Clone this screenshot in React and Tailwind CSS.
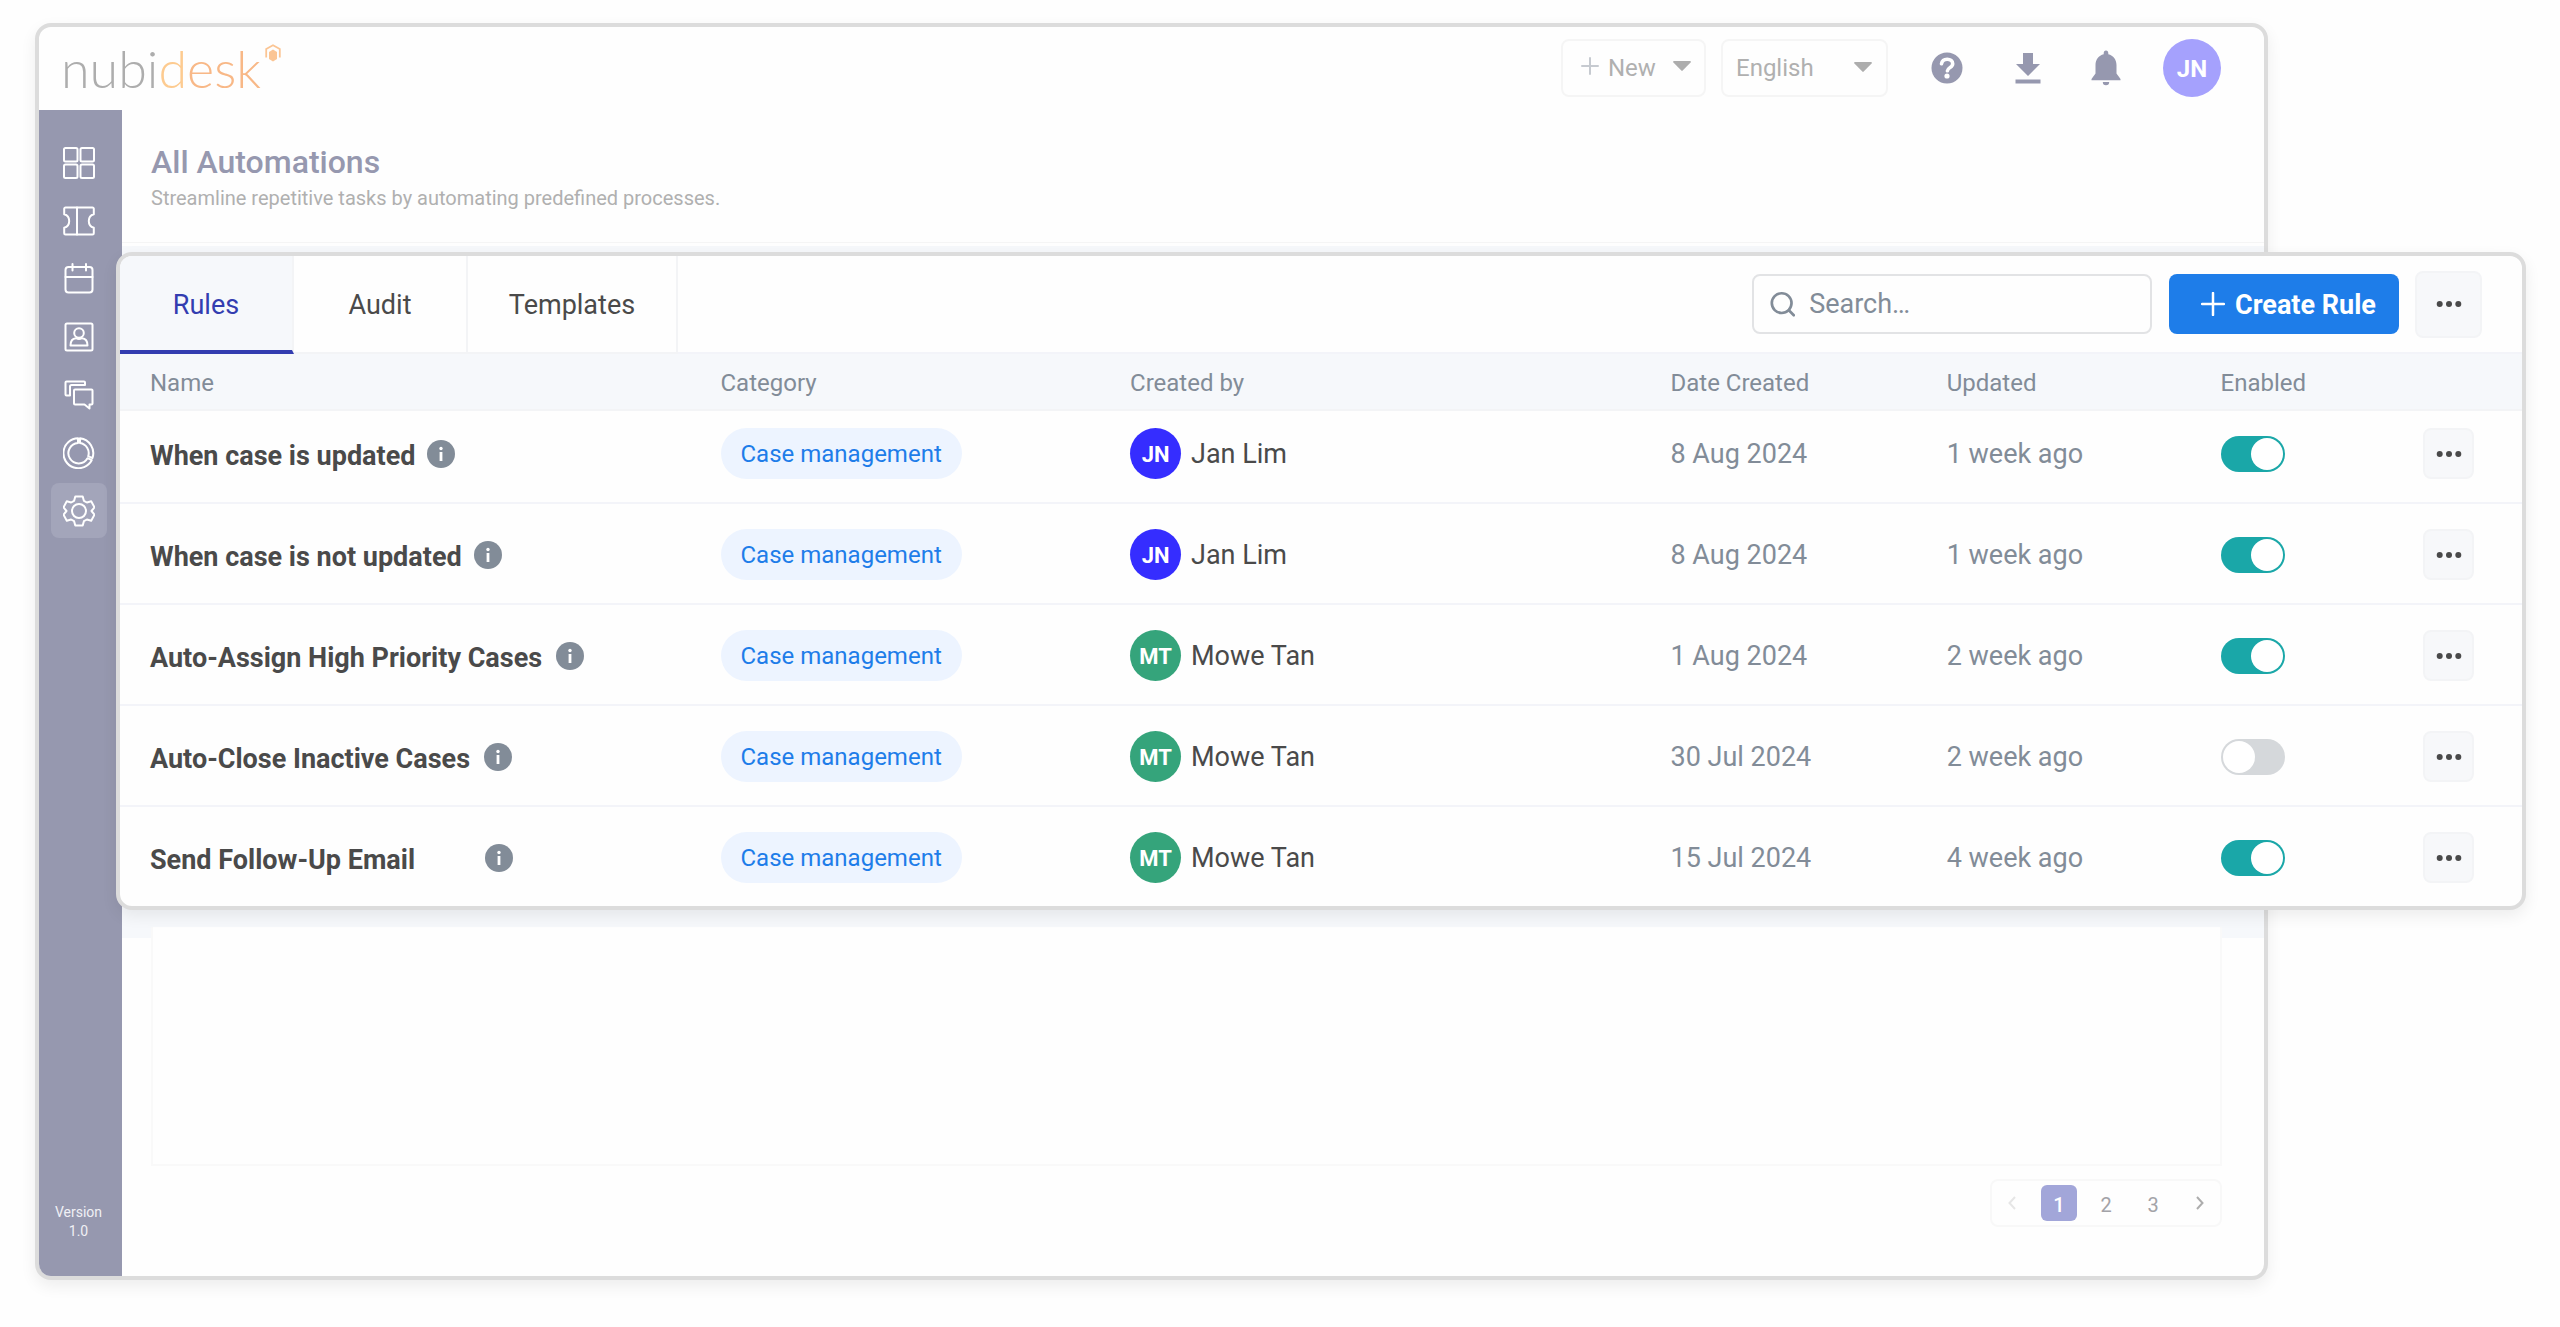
import { useState } from 'react';

const initialRules = [
  { id: 1, name: 'When case is updated', infoGap: 'ml-3', category: 'Case management', initials: 'JN', avatar: 'bg-[#352dff]', owner: 'Jan Lim', created: '8 Aug 2024', updated: '1 week ago', enabled: true },
  { id: 2, name: 'When case is not updated', infoGap: 'ml-3', category: 'Case management', initials: 'JN', avatar: 'bg-[#352dff]', owner: 'Jan Lim', created: '8 Aug 2024', updated: '1 week ago', enabled: true },
  { id: 3, name: 'Auto-Assign High Priority Cases', infoGap: 'ml-[14px]', category: 'Case management', initials: 'MT', avatar: 'bg-[#35a47b]', owner: 'Mowe Tan', created: '1 Aug 2024', updated: '2 week ago', enabled: true },
  { id: 4, name: 'Auto-Close Inactive Cases', infoGap: 'ml-[14px]', category: 'Case management', initials: 'MT', avatar: 'bg-[#35a47b]', owner: 'Mowe Tan', created: '30 Jul 2024', updated: '2 week ago', enabled: false },
  { id: 5, name: 'Send Follow-Up Email', infoGap: 'ml-[70px]', category: 'Case management', initials: 'MT', avatar: 'bg-[#35a47b]', owner: 'Mowe Tan', created: '15 Jul 2024', updated: '4 week ago', enabled: true },
];

const tabs = [
  { name: 'Rules', width: 'w-[174px]' },
  { name: 'Audit', width: 'w-[174px]' },
  { name: 'Templates', width: 'w-[210px]' },
];

function LineIcon({ children }) {
  return (
    <svg viewBox="0 0 32 32" className="size-8" fill="none" stroke="currentColor" strokeWidth="2" strokeLinejoin="round" strokeLinecap="round" aria-hidden="true">
      {children}
    </svg>
  );
}

const navItems = [
  {
    label: 'Dashboard',
    icon: (
      <LineIcon>
        <rect x="1" y="1" width="13.500" height="13.500" rx="1.500" />
        <rect x="17.500" y="1" width="13.500" height="13.500" rx="1.500" />
        <rect x="1" y="17.500" width="13.500" height="13.500" rx="1.500" />
        <rect x="17.500" y="17.500" width="13.500" height="13.500" rx="1.500" />
      </LineIcon>
    ),
  },
  {
    label: 'Cases',
    icon: (
      <LineIcon>
        <path d="M2.500 2.500h27a1.300 1.300 0 0 1 1.300 1.300v5.400c-3.400.9-5 3.500-5 6.800s1.600 5.900 5 6.800v5.400a1.300 1.300 0 0 1-1.300 1.300h-27a1.300 1.300 0 0 1-1.300-1.300v-5.400c3.400-.9 5-3.500 5-6.800s-1.600-5.900-5-6.800V3.800a1.300 1.300 0 0 1 1.300-1.300z" />
        <path d="M14 2.500v27" />
      </LineIcon>
    ),
  },
  {
    label: 'Calendar',
    icon: (
      <LineIcon>
        <rect x="2.500" y="4" width="27" height="25.500" rx="3" />
        <path d="M2.500 14h27M9.500 1v6.500M23 1v6.500" />
      </LineIcon>
    ),
  },
  {
    label: 'Contacts',
    icon: (
      <LineIcon>
        <rect x="2.500" y="2.500" width="27" height="27" rx="1.500" />
        <circle cx="16" cy="12" r="4.800" />
        <path d="M7.500 24.500c0-4.500 2-7 5.500-7.300 1.800 1 4.200 1 6 0 3.500.3 5.500 2.800 5.500 7.300z" />
      </LineIcon>
    ),
  },
  {
    label: 'Conversations',
    icon: (
      <LineIcon>
        <path d="M7 16.500H3.500a1 1 0 0 1-1-1V3.500a1 1 0 0 1 1-1H21a1 1 0 0 1 1 1v2.500H8.500A1.500 1.500 0 0 0 7 7.500z" />
        <path d="M12 10.500h16.500a1 1 0 0 1 1 1v13a1 1 0 0 1-1 1h-2v4l-5-4H12a1 1 0 0 1-1-1v-13a1 1 0 0 1 1-1z" />
      </LineIcon>
    ),
  },
  {
    label: 'Reports',
    icon: (
      <LineIcon>
        <path d="M15 1.200a15 15 0 1 0 13.700 22l-4.200-2A10.200 10.200 0 1 1 15 6z" />
        <path d="M17 1.200V6a10.200 10.200 0 0 1 8.200 13.200l4.200 1.900A15 15 0 0 0 17 1.200z" />
      </LineIcon>
    ),
  },
  {
    label: 'Settings',
    active: true,
    icon: (
      <LineIcon>
        <circle cx="16" cy="16" r="7" />
        <path d="M12.300 1.500h7.400l1.200 4.300 3 1.700 4.300-1.200 3.300 6-3 3.700 3 3.700-3.300 6-4.300-1.200-3 1.700-1.200 4.300h-7.400l-1.200-4.300-3-1.700-4.300 1.200-3.300-6 3-3.700-3-3.700 3.300-6 4.300 1.200 3-1.700z" />
      </LineIcon>
    ),
  },
];

function Caret({ className }) {
  return (
    <svg viewBox="0 0 18 10" className={`h-[10px] w-[18px] ${className}`} fill="#adadad" aria-hidden="true">
      <path d="M1 0h16q1.400.2.6 1.400L9.700 9.600q-.7.700-1.400 0L.4 1.400Q-.4.200 1 0z" />
    </svg>
  );
}

function Dots() {
  return (
    <svg viewBox="0 0 26 8" className="h-2 w-[26px]" fill="#4a4a4a" aria-hidden="true">
      <circle cx="3.700" cy="4" r="3" />
      <circle cx="13" cy="4" r="3" />
      <circle cx="22.300" cy="4" r="3" />
    </svg>
  );
}

function InfoIcon() {
  return (
    <svg viewBox="0 0 28 28" className="size-7" aria-hidden="true">
      <circle cx="14" cy="14" r="14" fill="#828c98" />
      <circle cx="14" cy="8.500" r="1.700" fill="#fff" />
      <path d="M14 12v9" stroke="#fff" strokeWidth="2.800" />
    </svg>
  );
}

function Logo() {
  return (
    <a href="#home" className="flex items-start font-['Lato',sans-serif] text-[52px] leading-[60px] font-light" aria-label="nubidesk">
      <span className="text-[#adadad]">nubi</span>
      <span className="text-[#fdcb90]">d</span>
      <span className="text-[#f8b887]">esk</span>
      <svg viewBox="0 0 16 18" className="mt-[6px] ml-1 h-[18px] w-4" aria-hidden="true">
        <path d="M1.200 13.500V5L8 1.200 14.800 5v8.500" fill="none" stroke="#fbc594" strokeWidth="1.800" />
        <path d="M8 5.500l4 2.500v7L8 17.500 4 15V8z" fill="#fbc594" />
      </svg>
    </a>
  );
}

function TopBar() {
  return (
    <header className="flex h-[83px] items-center pr-[43px] pb-[2px] pl-[22px]">
      <Logo />
      <div className="ml-auto flex items-center text-2xl text-[#b0b0b0]">
        <button className="flex h-[58px] w-[145px] items-center rounded-lg border-2 border-[#f5f5f5] pl-[18px]">
          <svg viewBox="0 0 18 18" className="mb-1 size-[18px]" stroke="#c6cad0" strokeWidth="2" strokeLinecap="round" aria-hidden="true">
            <path d="M9 1v16M1 9h16" />
          </svg>
          <span className="ml-[9px]">New</span>
          <Caret className="mr-[13px] mb-1 ml-auto" />
        </button>
        <div className="relative ml-[15px]">
          <select aria-label="Language" className="h-[58px] w-[167px] appearance-none rounded-lg border-2 border-[#f5f5f5] pl-[13px]">
            <option>English</option>
          </select>
          <Caret className="pointer-events-none absolute top-[23px] right-4" />
        </div>
        <button aria-label="Help" className="ml-[43px]">
          <svg viewBox="0 0 32 32" className="size-8">
            <circle cx="16" cy="16" r="15.500" fill="#9698af" />
            <path d="M10.500 11.800c.5-3 2.600-4.600 5.700-4.600 3.200 0 5.500 1.800 5.500 4.500 0 3.800-5 3.900-5.300 7.100" fill="none" stroke="#fff" strokeWidth="3.600" strokeLinecap="round" strokeLinejoin="round" />
            <circle cx="16" cy="24" r="2.600" fill="#fff" />
          </svg>
        </button>
        <button aria-label="Download" className="ml-[52px]">
          <svg viewBox="0 0 26 32" className="h-8 w-[26px]" fill="#9698af">
            <path d="M8 1h10v11h7L13 24 1 12h7zM.500 27.500h25v4H.500z" />
          </svg>
        </button>
        <button aria-label="Notifications" className="ml-[50px]">
          <svg viewBox="0 0 30 36" className="h-9 w-[30px]" fill="#9698af">
            <path d="M15 .500c1.500 0 2.300 1.200 2.300 2.700v1c5 1.200 8.200 5.300 8.200 10.800v8.500L29.500 29v1.300H.500V29l4-5.500V15c0-5.500 3.200-9.600 8.200-10.800v-1C12.700 1.700 13.500.500 15 .500zM11.800 32h6.400a3.200 3.200 0 0 1-6.400 0z" />
          </svg>
        </button>
        <button aria-label="Account" className="ml-[42px] size-[58px] rounded-full bg-[#a5a1fd] pt-[2px] text-2xl font-bold text-white">
          JN
        </button>
      </div>
    </header>
  );
}

function Sidebar() {
  return (
    <nav className="flex w-[83px] flex-col items-center bg-[#9698af] pt-[25px] pr-1 pb-[35px] text-white">
      <ul className="flex flex-col gap-[3px]">
        {navItems.map((item) => (
          <li key={item.label}>
            <a
              href={`#${item.label.toLowerCase()}`}
              aria-label={item.label}
              className={`flex h-[55px] w-14 items-center justify-center rounded-lg ${item.active ? 'bg-[#a3a5ba]' : ''}`}
            >
              {item.icon}
            </a>
          </li>
        ))}
      </ul>
      <p className="mt-auto text-center text-sm leading-[19px] text-[#f0f0f5]">
        Version
        <br />
        1.0
      </p>
    </nav>
  );
}

function Pagination() {
  return (
    <div className="flex h-12 items-center gap-[11px] rounded-lg border-2 border-[#f8f8f8] px-[2px] text-xl text-[#a3a3a8]">
      <button aria-label="Previous page" className="flex size-9 items-center justify-center">
        <svg viewBox="0 0 8 14" className="h-[14px] w-2" fill="none" stroke="#e6e6e6" strokeWidth="2">
          <path d="M7 1L1.500 7 7 13" />
        </svg>
      </button>
      <button className="size-9 rounded-md bg-[#a2a6d9] pt-1 font-medium text-white">1</button>
      <button className="size-9 pt-1">2</button>
      <button className="size-9 pt-1">3</button>
      <button aria-label="Next page" className="flex size-9 items-center justify-center">
        <svg viewBox="0 0 8 14" className="h-[14px] w-2" fill="none" stroke="#adadad" strokeWidth="2">
          <path d="M1 1l5.500 6L1 13" />
        </svg>
      </button>
    </div>
  );
}

function RulesPanel() {
  const [activeTab, setActiveTab] = useState('Rules');
  const [rules, setRules] = useState(initialRules);

  const toggleRule = (id) => {
    setRules(rules.map((rule) => (rule.id === id ? { ...rule, enabled: !rule.enabled } : rule)));
  };

  return (
    <section className="absolute top-[252px] right-[34px] left-[116px] overflow-hidden rounded-2xl border-4 border-[#dcdcdc] bg-[#fefefe] shadow-[0_6px_16px_rgba(0,0,0,0.07)]">
      {/* Tabs and actions */}
      <div className="flex h-[98px]">
        <div role="tablist" className="flex text-[27px] text-[#4a4a4a]">
          {tabs.map((tab) => (
            <button
              key={tab.name}
              role="tab"
              aria-selected={activeTab === tab.name}
              onClick={() => setActiveTab(tab.name)}
              className={`${tab.width} border-r-2 border-r-[#f3f4f6] ${
                activeTab === tab.name ? 'border-b-4 border-b-[#333db0] bg-[#f6f8fb] pt-1 text-[#333db0]' : 'border-b-2 border-b-[#f3f4f6] pt-[2px]'
              }`}
            >
              {tab.name}
            </button>
          ))}
        </div>
        <div className="flex flex-1 items-center justify-end border-b-2 border-[#f3f4f9] pr-10">
          <label className="flex h-[60px] w-[400px] items-center rounded-lg border-2 border-[#e2e3e5] pl-4">
            <svg viewBox="0 0 28 28" className="size-7" fill="none" stroke="#828c98" strokeWidth="3" strokeLinecap="round" aria-hidden="true">
              <circle cx="13" cy="13" r="11" />
              <path d="M21 21l5.500 5.500" />
            </svg>
            <input type="text" aria-label="Search" placeholder="Search…" className="ml-[14px] w-full min-w-0 text-[27px] outline-none placeholder:text-[#828c98]" />
          </label>
          <button className="ml-[17px] flex h-[60px] w-[230px] items-center rounded-lg bg-[#1e7de9] pl-8 text-[27px] font-bold text-white">
            <svg viewBox="0 0 24 24" className="size-6" stroke="currentColor" strokeWidth="2.500" strokeLinecap="round" aria-hidden="true">
              <path d="M12 1v22M1 12h22" />
            </svg>
            <span className="ml-[10px] pt-[2px] whitespace-nowrap">Create Rule</span>
          </button>
          <button aria-label="More actions" className="ml-4 flex size-[67px] items-center justify-center rounded-lg border-2 border-[#f3f4f6] bg-[#f7f8fa]">
            <Dots />
          </button>
        </div>
      </div>

      {/* Rules table */}
      <table className="w-full table-fixed border-separate border-spacing-0 text-[27px] leading-8 text-[#828c98]">
        <colgroup>
          <col className="w-[25%]" />
          <col className="w-[17.05%]" />
          <col className="w-[22.5%]" />
          <col className="w-[11.5%]" />
          <col className="w-[11.4%]" />
          <col className="w-[8.45%]" />
          <col />
        </colgroup>
        <thead className="bg-[#f6f8fb] text-2xl">
          <tr className="h-[57px] text-left *:border-b-2 *:border-[#f3f4f6] *:pt-[2px] *:font-normal">
            <th className="pl-[30px]">Name</th>
            <th>Category</th>
            <th>Created by</th>
            <th>Date Created</th>
            <th>Updated</th>
            <th>Enabled</th>
            <th aria-label="Actions" />
          </tr>
        </thead>
        <tbody>
          {rules.map((rule) => (
            <tr
              key={rule.id}
              className="*:border-b-2 *:border-[#f3f4f9] *:pt-[25px] *:pb-[23px] first:*:pt-[17px] last:*:border-b-0"
            >
              <td className="pl-[30px]">
                <div className="flex items-center">
                  <span className="pt-1 font-bold whitespace-nowrap text-[#4a4a4a]">{rule.name}</span>
                  <button aria-label={`About ${rule.name}`} className={rule.infoGap}>
                    <InfoIcon />
                  </button>
                </div>
              </td>
              <td>
                <span className="inline-flex h-[51px] items-center rounded-full bg-[#edf4ff] px-5 align-top text-2xl text-[#1e7de9]">
                  {rule.category}
                </span>
              </td>
              <td>
                <div className="flex items-center gap-[10px] text-[#4a4a4a]">
                  <span className={`flex size-[51px] items-center justify-center rounded-full pt-[2px] text-[22px] font-bold text-white ${rule.avatar}`}>
                    {rule.initials}
                  </span>
                  {rule.owner}
                </div>
              </td>
              <td>{rule.created}</td>
              <td>{rule.updated}</td>
              <td>
                <input
                  type="checkbox"
                  role="switch"
                  aria-label={`Enable ${rule.name}`}
                  checked={rule.enabled}
                  onChange={() => toggleRule(rule.id)}
                  className="block h-9 w-16 appearance-none rounded-full bg-[#d5d8db] p-[2px] before:block before:size-8 before:rounded-full before:bg-white checked:bg-[#1aa7a8] checked:before:translate-x-7"
                />
              </td>
              <td>
                <button
                  aria-label={`Actions for ${rule.name}`}
                  className="flex size-[51px] items-center justify-center rounded-lg border-2 border-[#f3f4f6] bg-[#f7f8fa]"
                >
                  <Dots />
                </button>
              </td>
            </tr>
          ))}
        </tbody>
      </table>
    </section>
  );
}

function App() {
  return (
    <div className="relative flex min-h-screen flex-col bg-[#fefefe] pt-[23px] pr-[292px] pb-[47px] pl-[35px] font-['Roboto',sans-serif]">
      <div className="flex flex-1 flex-col overflow-hidden rounded-2xl border-4 border-[#dcdcdc] bg-[#fefefe] shadow-[0_6px_16px_rgba(0,0,0,0.07)]">
        <TopBar />
        <div className="flex flex-1">
          <Sidebar />
          <main className="flex flex-1 flex-col">
            <div className="h-[133px] border-b border-[#f5f5f5] px-[29px] pt-8">
              <h1 className="text-[32px] leading-10 font-medium text-[#9698af]">All Automations</h1>
              <p className="mt-[2px] text-xl leading-7 text-[#b0b0b0]">Streamline repetitive tasks by automating predefined processes.</p>
            </div>
            <div className="mt-[3px] h-[692px] bg-[#f6f8fb]" />
            <div className="mr-[42px] -mt-[11px] ml-[29px] h-[239px] border-2 border-t-0 border-[#f9f9f9] bg-[#fefefe]" />
            <div className="mt-[13px] mr-[42px] flex justify-end">
              <Pagination />
            </div>
          </main>
        </div>
      </div>
      <RulesPanel />
    </div>
  );
}

export default App;
